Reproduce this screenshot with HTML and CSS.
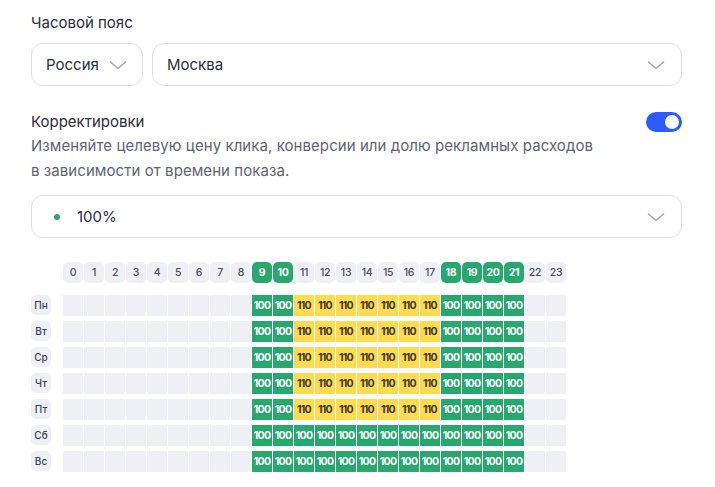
FILE: index.html
```html
<!DOCTYPE html>
<html lang="ru">
<head>
<meta charset="utf-8">
<link rel="stylesheet" href="styles.css">
</head>
<body>
<div class="page">
  <div class="label">Часовой пояс</div>
  <div class="tz-row">
    <div class="select select-country">
      <span class="select-text">Россия</span>
      <svg class="chev" width="18" height="10" viewBox="0 0 18 10"><path d="M1 1.5l8 7 8-7" fill="none" stroke="#a3a8ba" stroke-width="1.5"/></svg>
    </div>
    <div class="select select-city">
      <span class="select-text">Москва</span>
      <svg class="chev" width="18" height="10" viewBox="0 0 18 10"><path d="M1 1.5l8 7 8-7" fill="none" stroke="#a3a8ba" stroke-width="1.5"/></svg>
    </div>
  </div>

  <div class="corr-head">
    <div class="label">Корректировки</div>
    <div class="toggle"><span class="knob"></span></div>
  </div>
  <div class="desc">Изменяйте целевую цену клика, конверсии или долю рекламных расходов<br>в зависимости от времени показа.</div>

  <div class="select select-pct">
    <span class="pct"><span class="dot"></span>100%</span>
    <svg class="chev" width="18" height="10" viewBox="0 0 18 10"><path d="M1 1.5l8 7 8-7" fill="none" stroke="#a3a8ba" stroke-width="1.5"/></svg>
  </div>

  <div class="grid">
    <div class="head-row">
      <div class="day-spacer"></div>
      <div class="hours">
        <span class="h">0</span><span class="h">1</span><span class="h">2</span><span class="h">3</span><span class="h">4</span><span class="h">5</span><span class="h">6</span><span class="h">7</span><span class="h">8</span><span class="h on">9</span><span class="h on">10</span><span class="h">11</span><span class="h">12</span><span class="h">13</span><span class="h">14</span><span class="h">15</span><span class="h">16</span><span class="h">17</span><span class="h on">18</span><span class="h on">19</span><span class="h on">20</span><span class="h on">21</span><span class="h">22</span><span class="h">23</span>
      </div>
    </div>

    <div class="row">
      <span class="day">Пн</span>
      <div class="cells">
        <span class="c"></span><span class="c"></span><span class="c"></span><span class="c"></span><span class="c"></span><span class="c"></span><span class="c"></span><span class="c"></span><span class="c"></span><span class="c g">100</span><span class="c g">100</span><span class="c y">110</span><span class="c y">110</span><span class="c y">110</span><span class="c y">110</span><span class="c y">110</span><span class="c y">110</span><span class="c y">110</span><span class="c g">100</span><span class="c g">100</span><span class="c g">100</span><span class="c g">100</span><span class="c"></span><span class="c"></span>
      </div>
    </div>
    <div class="row">
      <span class="day">Вт</span>
      <div class="cells">
        <span class="c"></span><span class="c"></span><span class="c"></span><span class="c"></span><span class="c"></span><span class="c"></span><span class="c"></span><span class="c"></span><span class="c"></span><span class="c g">100</span><span class="c g">100</span><span class="c y">110</span><span class="c y">110</span><span class="c y">110</span><span class="c y">110</span><span class="c y">110</span><span class="c y">110</span><span class="c y">110</span><span class="c g">100</span><span class="c g">100</span><span class="c g">100</span><span class="c g">100</span><span class="c"></span><span class="c"></span>
      </div>
    </div>
    <div class="row">
      <span class="day">Ср</span>
      <div class="cells">
        <span class="c"></span><span class="c"></span><span class="c"></span><span class="c"></span><span class="c"></span><span class="c"></span><span class="c"></span><span class="c"></span><span class="c"></span><span class="c g">100</span><span class="c g">100</span><span class="c y">110</span><span class="c y">110</span><span class="c y">110</span><span class="c y">110</span><span class="c y">110</span><span class="c y">110</span><span class="c y">110</span><span class="c g">100</span><span class="c g">100</span><span class="c g">100</span><span class="c g">100</span><span class="c"></span><span class="c"></span>
      </div>
    </div>
    <div class="row">
      <span class="day">Чт</span>
      <div class="cells">
        <span class="c"></span><span class="c"></span><span class="c"></span><span class="c"></span><span class="c"></span><span class="c"></span><span class="c"></span><span class="c"></span><span class="c"></span><span class="c g">100</span><span class="c g">100</span><span class="c y">110</span><span class="c y">110</span><span class="c y">110</span><span class="c y">110</span><span class="c y">110</span><span class="c y">110</span><span class="c y">110</span><span class="c g">100</span><span class="c g">100</span><span class="c g">100</span><span class="c g">100</span><span class="c"></span><span class="c"></span>
      </div>
    </div>
    <div class="row">
      <span class="day">Пт</span>
      <div class="cells">
        <span class="c"></span><span class="c"></span><span class="c"></span><span class="c"></span><span class="c"></span><span class="c"></span><span class="c"></span><span class="c"></span><span class="c"></span><span class="c g">100</span><span class="c g">100</span><span class="c y">110</span><span class="c y">110</span><span class="c y">110</span><span class="c y">110</span><span class="c y">110</span><span class="c y">110</span><span class="c y">110</span><span class="c g">100</span><span class="c g">100</span><span class="c g">100</span><span class="c g">100</span><span class="c"></span><span class="c"></span>
      </div>
    </div>
    <div class="row">
      <span class="day">Сб</span>
      <div class="cells">
        <span class="c"></span><span class="c"></span><span class="c"></span><span class="c"></span><span class="c"></span><span class="c"></span><span class="c"></span><span class="c"></span><span class="c"></span><span class="c g">100</span><span class="c g">100</span><span class="c g">100</span><span class="c g">100</span><span class="c g">100</span><span class="c g">100</span><span class="c g">100</span><span class="c g">100</span><span class="c g">100</span><span class="c g">100</span><span class="c g">100</span><span class="c g">100</span><span class="c g">100</span><span class="c"></span><span class="c"></span>
      </div>
    </div>
    <div class="row">
      <span class="day">Вс</span>
      <div class="cells">
        <span class="c"></span><span class="c"></span><span class="c"></span><span class="c"></span><span class="c"></span><span class="c"></span><span class="c"></span><span class="c"></span><span class="c"></span><span class="c g">100</span><span class="c g">100</span><span class="c g">100</span><span class="c g">100</span><span class="c g">100</span><span class="c g">100</span><span class="c g">100</span><span class="c g">100</span><span class="c g">100</span><span class="c g">100</span><span class="c g">100</span><span class="c g">100</span><span class="c g">100</span><span class="c"></span><span class="c"></span>
      </div>
    </div>
  </div>
</div>
</body>
</html>
```
FILE: styles.css
```css
* { box-sizing: border-box; }
html, body { margin: 0; padding: 0; background: #fff; }
body {
  font-family: "Inter", "Roboto", "Liberation Sans", sans-serif;
  color: #1f2232;
}
.page {
  width: 651px;
  margin-left: 31px;
  padding-top: 13px;
}
.label {
  font-size: 15px;
  line-height: 20px;
  color: #2b2e3d;
}
.tz-row {
  display: flex;
  gap: 9px;
  margin-top: 10px;
}
.select {
  height: 43px;
  border: 1px solid #dcdfe9;
  border-radius: 12px;
  display: flex;
  align-items: center;
  justify-content: space-between;
  padding: 0 16px 0 14px;
  font-size: 15px;
  color: #2b2e3d;
}
.select-country { width: 112px; padding-right: 15px; }
.select-city { flex: 1; padding-right: 16px; }
.chev { display: block; }
.corr-head {
  display: flex;
  justify-content: space-between;
  align-items: center;
  margin-top: 26px;
}
.toggle {
  width: 36px;
  height: 20px;
  border-radius: 10px;
  background: #2c5cfb;
  position: relative;
}
.knob {
  position: absolute;
  right: 3px;
  top: 3px;
  width: 14px;
  height: 14px;
  border-radius: 50%;
  background: #fff;
}
.desc {
  font-size: 15px;
  line-height: 25px;
  color: #5f6377;
  margin-top: 1px;
  letter-spacing: 0.07px;
}
.select-pct {
  margin-top: 12px;
  height: 43px;
  padding-left: 22px;
}
.pct { display: flex; align-items: center; }
.dot {
  width: 6px;
  height: 6px;
  border-radius: 50%;
  background: #27a86e;
  margin-right: 17px;
}
.grid {
  margin-top: 24px;
  font-size: 10px;
}
.head-row, .row {
  display: flex;
  gap: 12px;
}
.day-spacer { width: 20px; }
.hours, .cells {
  display: flex;
  gap: 1px;
}
.h {
  width: 20px;
  height: 21px;
  border-radius: 5px;
  background: #eef0f5;
  color: #4a4e60;
  display: flex;
  align-items: center;
  justify-content: center;
  font-weight: 500;
  font-size: 10.5px;
  letter-spacing: -0.3px;
}
.h.on {
  background: #27a86e;
  color: #fff;
  font-weight: 700;
}
.row { margin-top: 5px; }
.head-row + .row { margin-top: 12px; }
.day {
  width: 20px;
  height: 20px;
  border-radius: 5px;
  background: #eef0f5;
  color: #3b3f52;
  display: flex;
  align-items: center;
  justify-content: center;
  font-size: 10px;
  font-weight: 500;
}
.c {
  width: 20px;
  height: 21px;
  background: #eef0f5;
  display: flex;
  align-items: center;
  justify-content: center;
  font-size: 10.5px;
  font-weight: 700;
  letter-spacing: -0.7px;
  overflow: hidden;
}
.c.g { background: #27a86e; color: #fff; }
.c.y { background: #ffdb4d; color: #3e3a2a; }
```
